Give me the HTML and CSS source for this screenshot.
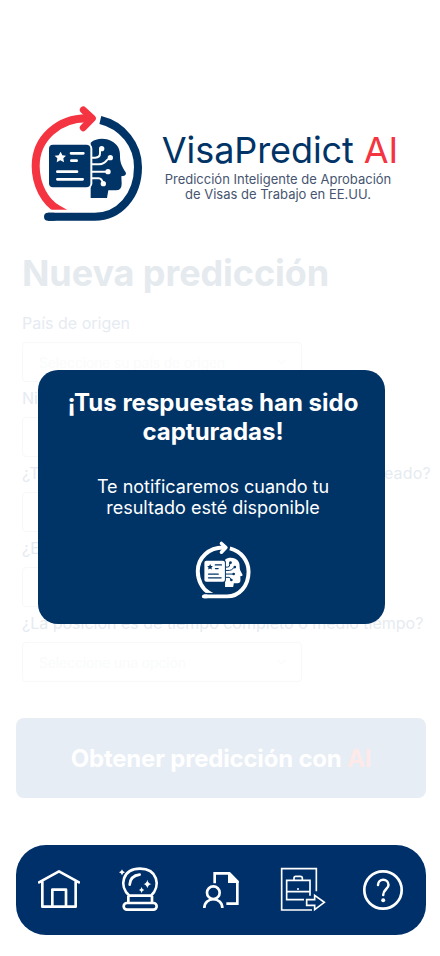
FILE: index.html
```html
<!DOCTYPE html>
<html lang="es">
<head>
<meta charset="utf-8">
<title>VisaPredict AI</title>
<link rel="stylesheet" href="styles.css">
</head>
<body>
<svg class="defs" aria-hidden="true">
  <symbol id="logo" viewBox="0 0 405 405">
    <path class="accent" d="M138 356L114 343C75 321 47 270 47 213C47 132 114 68 205 70" fill="none" stroke-width="24"/>
    <path class="base" d="M65 344H175V374H65Z"/>
    <path class="accent" d="M190 45L217 70L190 98" fill="none" stroke-width="21" stroke-linecap="round" stroke-linejoin="round"/>
    <path d="M241 75C309 91 354 151 354 216C354 302 298 365 224 365H84" fill="none" stroke="currentColor" stroke-width="24"/>
    <path d="M100 365H84" stroke="currentColor" stroke-width="24" stroke-linecap="round"/>
    <path d="M212 143C230 128 256 129 274 138C292 147 301 162 300 183C300 202 304 211 317 232Q320 239 313 242L304 244L305 266Q305 286 287 286H265L261 309H212Z" fill="currentColor"/>
    <rect class="base" x="82" y="144" width="135" height="138" rx="17"/>
    <rect x="87" y="149" width="124" height="128" rx="12" fill="currentColor"/>
    <path class="base" d="M122 170L127 181L138 182L130 190L132 202L121 196L110 202L112 190L104 182L116 181Z"/>
    <g class="lines" fill="none" stroke-linecap="round">
      <path stroke-width="8" d="M153 175H190M154 197H170M112 230H171M112 253H188"/>
      <path stroke-width="6" d="M217 188H226Q240 188 240 175V162M217 208H238Q252 207 260 196L270 188M217 230H264M217 250H236Q246 250 249 266"/>
    </g>
    <g class="base"><circle cx="245" cy="161" r="8"/><circle cx="271" cy="188" r="8"/><circle cx="264" cy="230" r="8"/><circle cx="250" cy="266" r="8"/></g>
  </symbol>
</svg>
<header class="brand">
  <svg class="brand-logo"><use href="#logo"/></svg>
  <div class="brand-text">
    <div class="brand-name">VisaPredict <span class="red">AI</span></div>
    <p class="tagline">Predicción Inteligente de Aprobación<br>de Visas de Trabajo en EE.UU.</p>
  </div>
</header>
<main>
  <h1>Nueva predicción</h1>
  <form class="form">
    <label>País de origen</label>
    <div class="select"><span>Seleccione su país de origen</span><svg class="chevron" viewBox="0 0 10 6"><path d="M1 1L5 5L9 1"/></svg></div>
    <label>Nivel de estudios</label>
    <div class="select"></div>
    <label class="wide">¿Tienes experiencia en el puesto para ser empleado?</label>
    <div class="select"></div>
    <label>¿Es tu primera visa?</label>
    <div class="select"></div>
    <label>¿La posición es de tiempo completo o medio tiempo?</label>
    <div class="select"><span>Seleccione una opción</span><svg class="chevron" viewBox="0 0 10 6"><path d="M1 1L5 5L9 1"/></svg></div>
  </form>
  <div class="submit"><span>Obtener predicción con <span class="pale">AI</span></span></div>
</main>
<nav class="nav">
  <svg viewBox="28 29 42 42" class="home"><g transform="scale(.33333)"><path d="M87 127L147 94L207 127M97 123V200H197V123M127 200V149H168V200" stroke-width="8" stroke-linecap="round" stroke-linejoin="round"/></g></svg>
  <svg viewBox="109 27 46 45" class="ball"><g transform="scale(.33333)"><path stroke-width="8" d="M358 167C325 138 338 86 390 86C442 86 454 138 423 167ZM355 168V187M426 168V187"/><rect x="341" y="189" width="99" height="20" rx="10" stroke-width="8"/><path stroke-width="8" stroke-linecap="round" d="M359 134Q361 107 389 104"/><path class="solid" d="M412 119Q414 131 425 132Q414 134 412 145Q410 134 400 132Q410 131 412 119ZM395 141Q396 149 403 150Q396 151 395 159Q393 151 387 150Q393 149 395 141ZM336 88Q338 96 345 97Q338 98 336 106Q334 98 327 97Q334 96 336 88Z"/></g></svg>
  <svg viewBox="21 29 42 42" class="profile"><g transform="scale(.33333)"><path stroke-width="8" d="M104 130V100H148L172 125V191H139"/><path class="solid" d="M144 98H151L176 123V129H144Z"/><circle cx="100" cy="158" r="19" stroke-width="8"/><path stroke-width="8" d="M73 204C73 169 127 169 127 204"/></g></svg>
  <svg viewBox="99 27 48 45" class="job"><g transform="scale(.33333)"><path stroke-width="5" d="M409 154V86H305V210H396M372 179H320V121H390V167M320 155H390M342 121V114Q342 109 347 109H361Q367 109 367 114V121M380 179H404V166L433 187L404 209V196H380Z"/><circle class="solid" cx="354" cy="147" r="3"/></g></svg>
  <svg viewBox="0 0 42 42" class="help"><circle cx="21" cy="21" r="18.7" stroke-width="2.7"/><path d="M16 16C16 9 26.5 9 26.5 16C26.5 20 21.2 20.2 21.2 26" stroke-width="2.5" stroke-linecap="round"/><circle class="solid" cx="21.2" cy="31.3" r="2"/></svg>
</nav>
<section class="modal" role="dialog">
  <h2>¡Tus respuestas han sido<br>capturadas!</h2>
  <p>Te notificaremos cuando tu<br>resultado esté disponible</p>
  <svg class="modal-logo"><use href="#logo"/></svg>
</section>
</body>
</html>
```
FILE: styles.css
```css
* { box-sizing: border-box; }
body { margin: 0; width: 440px; height: 956px; background: #fff; font-family: Inter, sans-serif; position: relative; overflow: hidden; }
h1, h2, p { margin: 0; }
.defs { position: absolute; width: 0; height: 0; }
.brand { display: flex; padding: 95px 0 0 20px; height: 240px; color: #003366; --accent: #f43440; --logo-bg: #fff; }
.brand-logo { width: 135px; height: 135px; flex: none; }
.accent { stroke: var(--accent); }
.base { fill: var(--logo-bg); }
.lines { stroke: var(--logo-bg); }
.brand-text { margin-left: 3px; padding-top: 33px; width: 244px; text-align: center; white-space: nowrap; }
.brand-name { font-size: 36px; line-height: 44px; letter-spacing: -0.08px; }
.red { color: #f43440; }
.tagline { margin-left: -4px; font-size: 13px; line-height: 15px; color: #465570; }
main { padding: 12px 14px 0 16px; }
h1 { margin-left: 6px; font-size: 36px; line-height: 42px; font-weight: 700; letter-spacing: -0.08px; color: #e5eaef; white-space: nowrap; }
.form { margin: 19px 0 0 6px; }
.form label { display: block; height: 21px; line-height: 20px; font-size: 16px; color: #e6ebf1; white-space: nowrap; }
.form .wide { letter-spacing: 0.14px; }
.select { width: 280px; height: 40px; margin: 8px 0 6px; padding: 0 15px 0 16px; border: 1px solid #f7f8f9; border-radius: 4px; display: flex; align-items: center; justify-content: space-between; font-size: 14px; letter-spacing: -0.16px; color: #fafbfc; }
.chevron { width: 9px; height: 6px; fill: none; stroke: #f5f6f7; }
.submit { margin-top: 36px; height: 80px; border-radius: 8px; background: #e6edf5; color: #fff; font-size: 24px; font-weight: 700; letter-spacing: -0.2px; display: flex; align-items: center; justify-content: center; white-space: nowrap; }
.pale { color: #fee9e9; }
.nav { margin: 47px 14px 0 16px; height: 90px; border-radius: 30px; background: #003069; padding: 0 22px; display: flex; align-items: center; }
.nav svg { flex: none; fill: none; stroke: #fff; }
.nav .solid { fill: #fff; stroke: none; }
.modal { position: absolute; left: 38px; top: 370px; width: 347px; height: 254px; border-radius: 20px; background: #003366; color: #fff; padding: 18px 0 0 3px; text-align: center; --accent: #fff; --logo-bg: #003366; }
.modal h2 { font-size: 24px; line-height: 29px; font-weight: 700; white-space: nowrap; }
.modal p { margin-top: 30px; font-size: 18px; line-height: 21px; }
.modal-logo { display: block; width: 67px; height: 67px; margin: 18px 0 0 149px; }
.home { width: 42px; height: 42px; }
.ball { width: 46px; height: 45px; margin: 0 0 1px 39px; }
.profile { width: 42px; height: 42px; margin-left: 36px; }
.job { width: 48px; height: 45px; margin: 0 0 1px 36px; }
.help { width: 42px; height: 42px; margin-left: 35px; }
```
